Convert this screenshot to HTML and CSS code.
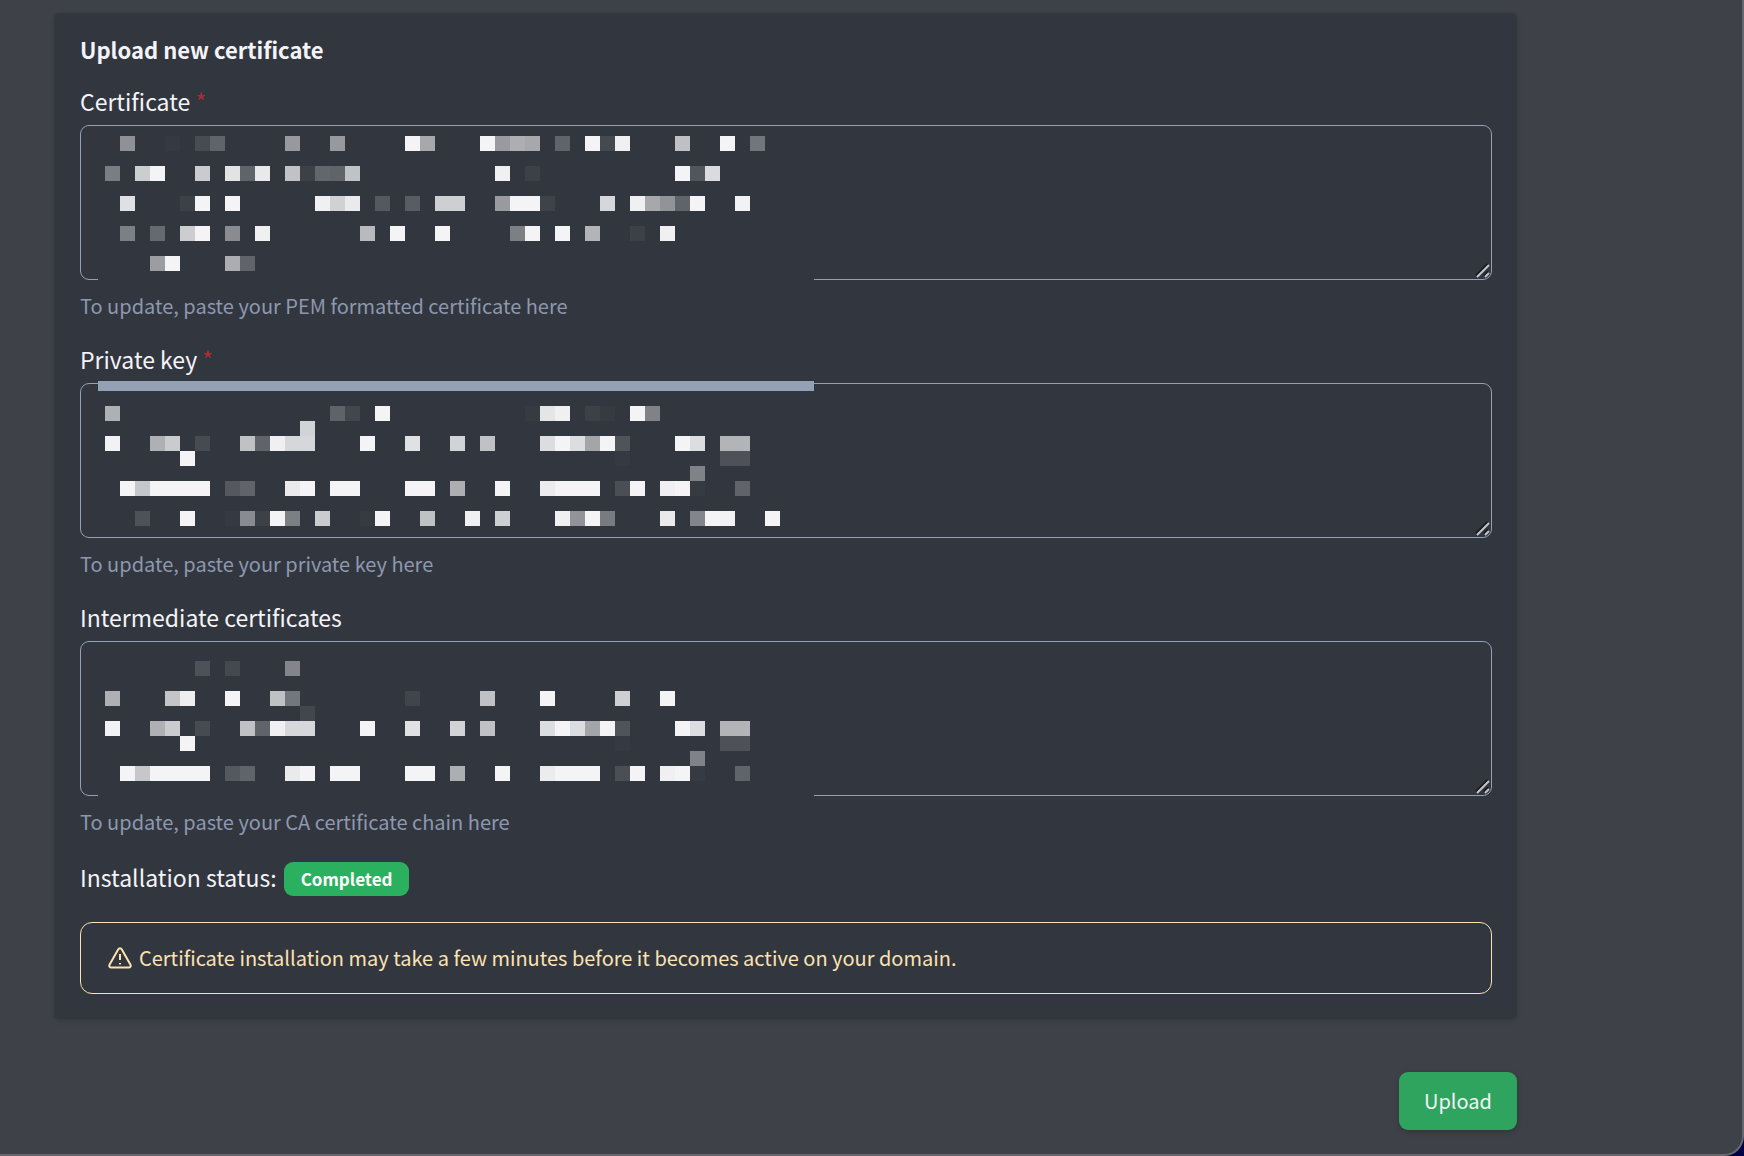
FILE: index.html
```
<!DOCTYPE html>
<html lang="en">
<head>
    <meta charset="UTF-8">
    <meta name="viewport" content="width=device-width, initial-scale=1.0">
    <title>Upload new certificate</title>
    <link rel="stylesheet" href="styles.css">
    <script src="mosaic.js" defer></script>
</head>
<body>
    <main class="window">
        <form class="cert-form">
            <section class="card">
                <h2 class="card-title">Upload new certificate</h2>

                <div class="form-group">
                    <label for="certificate">Certificate <span class="required">*</span></label>
                    <div class="field">
                        <textarea id="certificate" name="certificate" required></textarea>
                        <svg class="mosaic" data-mosaic="certificate" aria-hidden="true">
                            <rect class="cover" x="18" y="152" width="716" height="4"/>
                        </svg>
                        <svg class="grip" viewBox="0 0 16 16" aria-hidden="true">
                            <path class="grip-dark" d="M1 12.5L12.5 1M9 12.5L13 8.5"/>
                            <path class="grip-light" d="M2 14L14 2M10 14L14 10"/>
                        </svg>
                    </div>
                    <p class="help">To update, paste your PEM formatted certificate here</p>
                </div>

                <div class="form-group">
                    <label for="private-key">Private key <span class="required">*</span></label>
                    <div class="field">
                        <textarea id="private-key" name="private-key" required></textarea>
                        <svg class="mosaic" data-mosaic="privateKey" aria-hidden="true">
                            <rect class="bar" x="18" y="-2" width="716" height="10"/>
                        </svg>
                        <svg class="grip" viewBox="0 0 16 16" aria-hidden="true">
                            <path class="grip-dark" d="M1 12.5L12.5 1M9 12.5L13 8.5"/>
                            <path class="grip-light" d="M2 14L14 2M10 14L14 10"/>
                        </svg>
                    </div>
                    <p class="help">To update, paste your private key here</p>
                </div>

                <div class="form-group">
                    <label for="intermediate">Intermediate certificates</label>
                    <div class="field">
                        <textarea id="intermediate" name="intermediate"></textarea>
                        <svg class="mosaic" data-mosaic="intermediate" aria-hidden="true">
                            <rect class="cover" x="18" y="152" width="716" height="4"/>
                        </svg>
                        <svg class="grip" viewBox="0 0 16 16" aria-hidden="true">
                            <path class="grip-dark" d="M1 12.5L12.5 1M9 12.5L13 8.5"/>
                            <path class="grip-light" d="M2 14L14 2M10 14L14 10"/>
                        </svg>
                    </div>
                    <p class="help">To update, paste your CA certificate chain here</p>
                </div>

                <div class="status">
                    <span>Installation status:</span>
                    <span class="badge">Completed</span>
                </div>

                <div class="alert">
                    <svg class="alert-icon" viewBox="0 0 24 24" aria-hidden="true">
                        <path d="M10.3 3.2L1.5 18.8a1.9 1.9 0 0 0 1.7 2.8h17.6a1.9 1.9 0 0 0 1.7-2.8L13.7 3.2a1.95 1.95 0 0 0-3.4 0z"/>
                        <path d="M12 8v6M12 17v1.6"/>
                    </svg>
                    <span>Certificate installation may take a few minutes before it becomes active on your domain.</span>
                </div>
            </section>

            <div class="actions">
                <button type="submit">Upload</button>
            </div>
        </form>
    </main>
</body>
</html>
```

FILE: styles.css
```
html {
    background-color: #02024a;
}

body {
    margin: 0;
    font-family: "Noto Sans CJK SC", "Noto Sans", sans-serif;
    color: #f4f4f8;
}

.window {
    box-sizing: border-box;
    min-height: 100vh;
    padding: 13px 225px 22px 54px;
    background-color: #3e4248;
    border-right: 2px solid #66686e;
    border-bottom: 2px solid #66686e;
    border-bottom-right-radius: 20px;
}

.card {
    padding: 21px 25px 25px 26px;
    background-color: #32363f;
    border-radius: 5px;
    box-shadow: 0 2px 5px rgba(0, 0, 0, 0.15);
}

.card-title {
    margin: 0 0 22px;
    font-size: 22px;
    line-height: 30px;
    font-weight: bold;
}

.form-group {
    margin-bottom: 25px;
}

label {
    display: block;
    margin-bottom: 9px;
    font-size: 23px;
    line-height: 30px;
}

.required {
    color: #b02a30;
}

.field {
    position: relative;
}

textarea {
    display: block;
    box-sizing: border-box;
    width: 100%;
    height: 155px;
    padding: 10px 18px;
    color: inherit;
    font: inherit;
    background-color: transparent;
    border: 1px solid #94a0b4;
    border-radius: 9px;
    resize: none;
}

.mosaic {
    position: absolute;
    top: 0;
    left: 0;
    width: 734px;
    height: 155px;
    overflow: visible;
    pointer-events: none;
    shape-rendering: crispEdges;
}

.cover {
    fill: #32363f;
}

.bar {
    fill: #94a0b4;
}

.grip {
    position: absolute;
    right: 1px;
    bottom: 1px;
    width: 16px;
    height: 16px;
    fill: none;
    stroke-width: 2;
    pointer-events: none;
}

.grip-dark {
    stroke: #17191d;
}

.grip-light {
    stroke: #c4c5c8;
}

.help {
    margin: 13px 0 0;
    color: #8d98ae;
    font-size: 20px;
    line-height: 26px;
}

.status {
    display: flex;
    align-items: flex-start;
    gap: 7px;
    margin: 27px 0 26px;
    font-size: 23px;
    line-height: 30px;
}

.badge {
    padding: 0 17px;
    color: #fff;
    font-size: 17px;
    line-height: 34px;
    font-weight: bold;
    background-color: #2bb060;
    border-radius: 9px;
}

.alert {
    display: flex;
    align-items: center;
    gap: 7px;
    padding: 20px 27px;
    color: #fbe2b2;
    font-size: 20px;
    line-height: 30px;
    border: 1px solid #fbe2b2;
    border-radius: 12px;
}

.alert-icon {
    width: 24px;
    height: 24px;
    fill: none;
    stroke: currentColor;
    stroke-width: 2;
    stroke-linejoin: round;
}

.actions {
    display: flex;
    justify-content: flex-end;
    margin-top: 53px;
}

button {
    padding: 14px 25px;
    color: #f4f4f8;
    font-family: inherit;
    font-size: 20px;
    line-height: 30px;
    background-color: #2fa45e;
    border: none;
    border-radius: 9px;
    box-shadow: 0 2px 6px rgba(0, 0, 0, 0.2);
    cursor: pointer;
}

button:hover {
    background-color: #2a9455;
}
```

FILE: mosaic.js
```
// Censor blocks drawn over the secret fields.
// Each row is [y, 'column:shade ...'], shade is a hex grey level.
const CELL = 15;
const LEFT = 25;

const chainRows = [
    '0:f2 3:ae 4:ca 6:46 9:c0 10:60 11:f0 12:d6 13:d6 17:f4 20:e0 23:d2 25:c0 29:dc 30:f4 31:dc 32:a3 33:f4 34:50 38:f4 39:dc 41:b2 42:b2',
    '5:f4 34:35 41:4e 42:4e',
    '39:80',
    '1:f4 2:c6 3:f4 4:f4 5:f4 6:f4 8:55 9:60 12:ea 13:f4 15:f4 16:f4 20:f4 21:f4 23:ac 26:f4 29:ec 30:f4 31:f4 32:f4 34:4b 35:f4 37:f0 38:f4 39:36 42:60'
];

const mosaics = {
    certificate: [
        [11, '1:8f 4:35 6:47 7:60 12:97 15:97 20:f4 21:a6 25:f4 26:98 27:ac 28:a6 30:60 32:f4 33:45 34:f0 38:bf 41:f4 43:72'],
        [41, '0:7a 2:cc 3:f4 6:ca 8:e2 9:60 10:e9 12:c1 13:3c 14:63 15:60 16:c1 26:f0 28:3c 38:f4 39:52 40:da'],
        [71, '1:df 5:3c 6:f4 8:f4 14:f0 15:d0 16:ea 18:55 20:59 22:ce 23:ce 26:98 27:f4 28:f4 29:3e 33:d6 35:f0 36:a6 37:91 38:60 39:f4 42:f2'],
        [101, '1:7c 3:66 5:cc 6:f4 8:89 10:f0 17:b9 19:f4 22:f4 27:7c 28:f4 30:f4 32:b2 35:3c 37:f0'],
        [131, '3:9b 4:f4 8:ab 9:60']
    ],
    privateKey: [
        [23, '0:ae 15:5f 16:42 18:f4 28:36 29:e4 30:f0 32:3c 33:36 35:f4 36:80'],
        [38, '13:d2'],
        [53, chainRows[0]],
        [68, chainRows[1]],
        [83, chainRows[2]],
        [98, chainRows[3]],
        [128, '2:4e 5:f4 8:35 9:89 10:3c 11:f4 12:7c 14:ca 17:36 18:f4 21:c0 24:f0 26:ce 30:f0 31:91 32:f4 33:78 37:ea 39:83 40:f4 41:f2 44:f4']
    ],
    intermediate: [
        [20, '6:4e 8:44 12:83'],
        [50, '0:ae 4:c3 5:ee 8:f4 11:c0 12:73 20:40 25:c0 29:f4 34:ce 37:f4'],
        [65, '13:42'],
        [80, chainRows[0]],
        [95, chainRows[1]],
        [110, chainRows[2]],
        [125, chainRows[3]]
    ]
};

document.querySelectorAll('[data-mosaic]').forEach(function(svg) {
    mosaics[svg.dataset.mosaic].forEach(function([y, cells]) {
        cells.split(' ').forEach(function(cell) {
            const [column, shade] = cell.split(':');
            const grey = parseInt(shade, 16);
            // dark blocks lean towards the blue of the card
            const tint = (255 - grey) / 255;
            const green = grey + Math.round(tint * 5);
            const blue = grey + 2 + Math.round(tint * 12);
            const rect = document.createElementNS('http://www.w3.org/2000/svg', 'rect');
            rect.setAttribute('x', LEFT + column * CELL);
            rect.setAttribute('y', y);
            rect.setAttribute('width', CELL);
            rect.setAttribute('height', CELL);
            rect.setAttribute('fill', `rgb(${grey}, ${green}, ${blue})`);
            svg.appendChild(rect);
        });
    });
});
```
